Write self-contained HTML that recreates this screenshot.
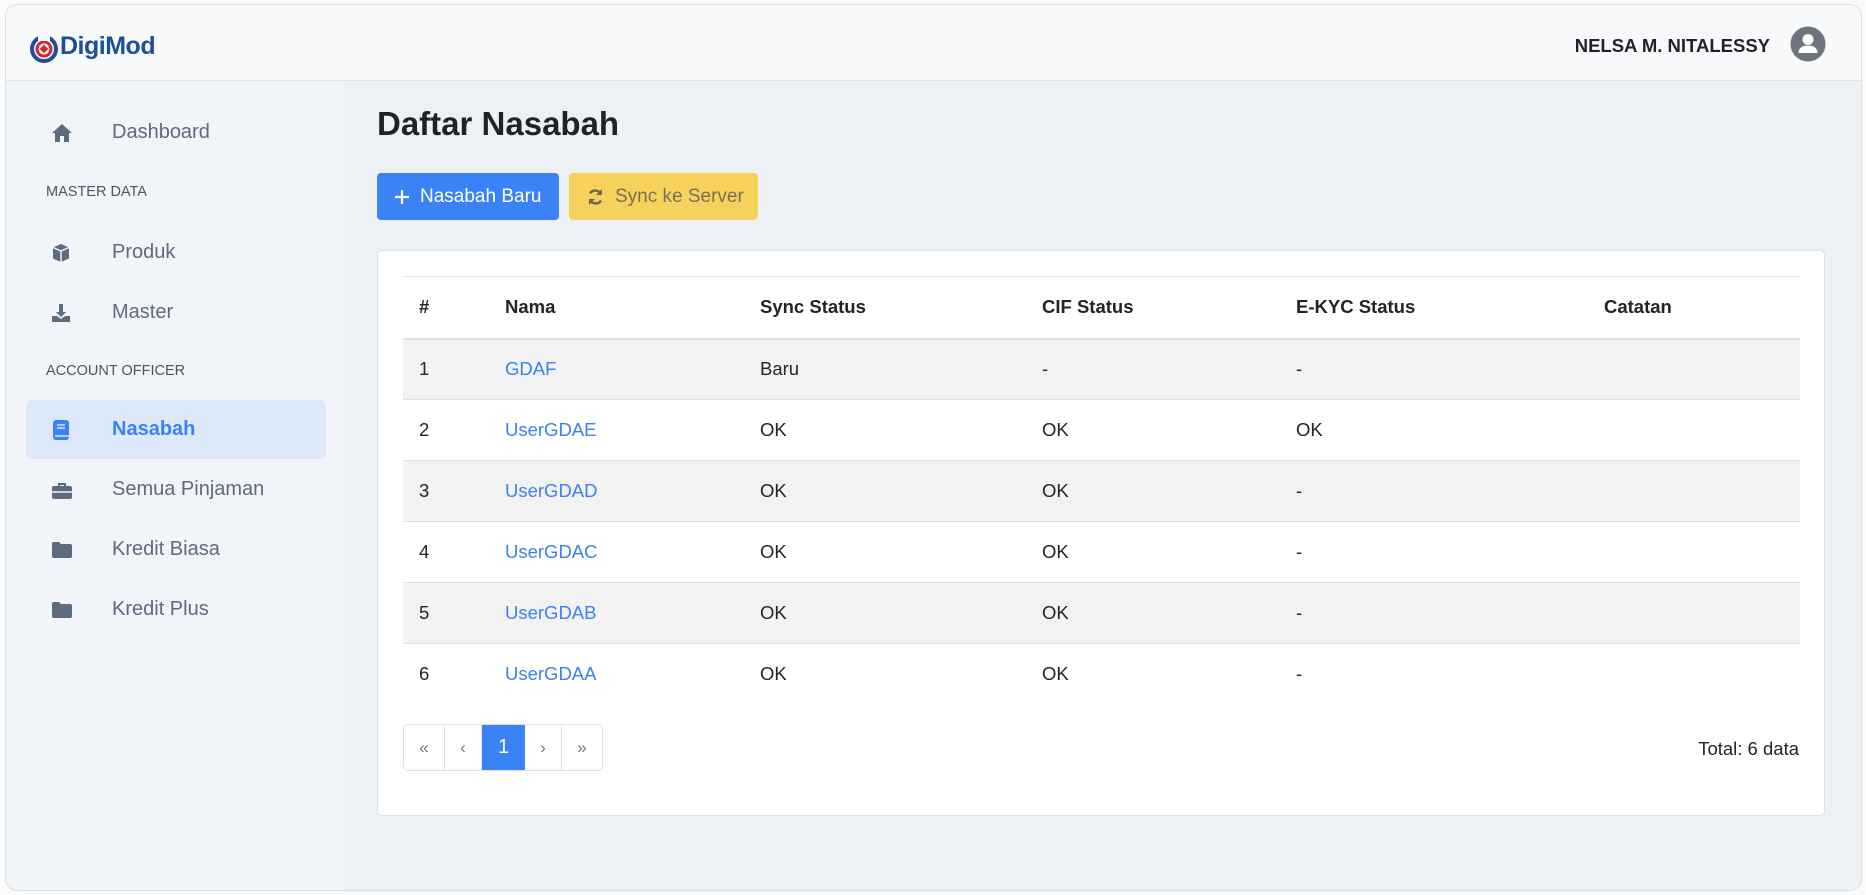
<!DOCTYPE html>
<html><head><meta charset="utf-8"><style>
*{box-sizing:border-box;margin:0;padding:0}
body{width:1866px;height:895px;background:#fafafa;font-family:"Liberation Sans",sans-serif;color:#212529;position:relative;overflow:hidden}
.frame{position:absolute;left:5px;top:4px;width:1857px;height:887px;border:1px solid #dcdfe3;border-radius:12px;overflow:hidden;background:#edf1f6}
.hdr{position:absolute;left:0;top:0;right:0;height:76px;background:#f8f9fb;border-bottom:1px solid #dde4ee}
.side{position:absolute;left:0;top:76px;width:340px;bottom:0;background:#f1f4f9;border-right:1px solid #e2e8f0}
.a{position:absolute}
.item{position:absolute;left:20px;width:300px;height:59px;font-size:20px;color:#5d6b80;display:flex;align-items:center}
.item svg{position:absolute;left:25px}
.item span{position:absolute;left:86px}
.lbl{position:absolute;left:40px;font-size:14.5px;color:#4b5565}
table{border-collapse:collapse;font-size:18.5px}
td,th{padding:0 16px;text-align:left;height:61px;border-bottom:1px solid #dee2e6}
th{font-weight:bold;height:62px;border-bottom:2px solid #dee2e6}
tr.o td{background:#f2f2f2}
a{color:#3b82f6;text-decoration:none}
.pg{position:absolute;left:397px;top:719px;height:47px;display:flex;border:1px solid #dee2e6;border-radius:5px;overflow:hidden}
.pg div{display:flex;align-items:center;justify-content:center;border-right:1px solid #dee2e6;color:#6c7a91;font-size:17px}
</style></head><body>
<div class="frame">
<div class="hdr">
 <svg class="a" style="left:24px;top:30px" width="28" height="28" viewBox="0 0 28 28"><circle cx="14" cy="14" r="12" fill="none" stroke="#1e4f9a" stroke-width="4"/><circle cx="14" cy="14" r="7" fill="none" stroke="#d7262c" stroke-width="3"/><rect x="11" y="11" width="6" height="6" transform="rotate(45 14 14)" fill="#d7262c"/><rect x="8" y="0" width="12" height="6" fill="#f8f9fb"/></svg>
 <div class="a" style="left:54px;top:27px;font-size:25px;font-weight:bold;color:#1e4f9a;letter-spacing:-0.5px">DigiMod</div>
 <div class="a" style="right:91px;top:30px;font-size:18.5px;font-weight:bold;color:#1f2329">NELSA M. NITALESSY</div>
 <svg class="a" style="left:1784px;top:21px" width="36" height="36" viewBox="0 0 36 36"><circle cx="18" cy="18" r="17.5" fill="#6c757d"/><circle cx="18" cy="13.5" r="5.5" fill="#fff"/><path d="M8.5 27c0-5 4-7.5 9.5-7.5s9.5 2.5 9.5 7.5z" fill="#fff"/></svg>
</div>
<div class="side">
 <div class="item" style="top:22px"><svg width="22" height="20" viewBox="0 0 22 20"><path d="M11 1L1 10h3v9h5v-6h4v6h5v-9h3z" fill="#5d6b80"/></svg><span>Dashboard</span></div>
 <div class="lbl" style="top:103px">MASTER DATA</div>
 <div class="item" style="top:142px"><svg width="20" height="20" viewBox="0 0 20 20"><path d="M10 1l8 3.5v11L10 19 2 15.5v-11z" fill="#5d6b80"/><path d="M2 4.5L10 8l8-3.5M10 8v11" stroke="#f1f4f9" stroke-width="1.5" fill="none"/></svg><span>Produk</span></div>
 <div class="item" style="top:202px"><svg width="20" height="20" viewBox="0 0 20 20"><path d="M8 1h4v8h3l-5 5-5-5h3z" fill="#5d6b80"/><path d="M1 13h5l4 3 4-3h5v6H1z" fill="#5d6b80"/></svg><span>Master</span></div>
 <div class="lbl" style="top:282px">ACCOUNT OFFICER</div>
 <div class="item" style="top:319px;background:#dde8f8;border-radius:6px;color:#3b82f6;font-weight:bold"><svg width="20" height="22" viewBox="0 0 20 22"><rect x="2" y="1" width="16" height="20" rx="3" fill="#3b82f6"/><path d="M6 6h8M6 9h8" stroke="#dde8f8" stroke-width="1.5"/><path d="M4 17h14" stroke="#dde8f8" stroke-width="1.5"/></svg><span>Nasabah</span></div>
 <div class="item" style="top:379px"><svg width="22" height="20" viewBox="0 0 22 20"><path d="M7 3h8v3h-2V5H9v1H7z" fill="#5d6b80"/><rect x="1" y="6" width="20" height="13" rx="2" fill="#5d6b80"/><path d="M1 12h20" stroke="#f1f4f9" stroke-width="1.5"/></svg><span>Semua Pinjaman</span></div>
 <div class="item" style="top:439px"><svg width="22" height="18" viewBox="0 0 22 18"><path d="M1 3a2 2 0 012-2h5l2 2h9a2 2 0 012 2v10a2 2 0 01-2 2H3a2 2 0 01-2-2z" fill="#5d6b80"/></svg><span>Kredit Biasa</span></div>
 <div class="item" style="top:499px"><svg width="22" height="18" viewBox="0 0 22 18"><path d="M1 3a2 2 0 012-2h5l2 2h9a2 2 0 012 2v10a2 2 0 01-2 2H3a2 2 0 01-2-2z" fill="#5d6b80"/></svg><span>Kredit Plus</span></div>
</div>
<div class="a" style="left:371px;top:100px;font-size:33px;font-weight:600;color:#1f2329">Daftar Nasabah</div>
<div class="a" style="left:371px;top:168px;width:182px;height:47px;background:#3b82f6;border-radius:4px;color:#fff;font-size:19px;display:flex;align-items:center;padding-left:17px"><svg width="16" height="16" viewBox="0 0 16 16" style="margin-right:10px"><path d="M8 1v14M1 8h14" stroke="#fff" stroke-width="2.2"/></svg>Nasabah Baru</div>
<div class="a" style="left:563px;top:168px;width:189px;height:47px;background:#f6d15c;border-radius:4px;color:#7a6f5a;font-size:19px;display:flex;align-items:center;padding-left:17px"><svg width="19" height="18" viewBox="0 0 19 18" style="margin-right:10px"><path d="M15 7a6 6 0 00-11-1.5M4 11a6 6 0 0011 1.5" stroke="#6f6656" stroke-width="2.4" fill="none"/><path d="M16 1v6h-6zM3 17v-6h6z" fill="#6f6656"/></svg>Sync ke Server</div>
<div class="a" style="left:371px;top:245px;width:1448px;height:566px;background:#fff;border:1px solid #dde2e8;border-radius:5px"></div>
<table class="a" style="left:397px;top:271px;width:1397px;border-top:1px solid #dee2e6">
<colgroup><col style="width:86px"><col style="width:255px"><col style="width:282px"><col style="width:254px"><col style="width:308px"><col></colgroup>
<tr><th>#</th><th>Nama</th><th>Sync Status</th><th>CIF Status</th><th>E-KYC Status</th><th>Catatan</th></tr>
<tr class="o"><td>1</td><td><a>GDAF</a></td><td>Baru</td><td>-</td><td>-</td><td></td></tr>
<tr><td>2</td><td><a>UserGDAE</a></td><td>OK</td><td>OK</td><td>OK</td><td></td></tr>
<tr class="o"><td>3</td><td><a>UserGDAD</a></td><td>OK</td><td>OK</td><td>-</td><td></td></tr>
<tr><td>4</td><td><a>UserGDAC</a></td><td>OK</td><td>OK</td><td>-</td><td></td></tr>
<tr class="o"><td>5</td><td><a>UserGDAB</a></td><td>OK</td><td>OK</td><td>-</td><td></td></tr>
<tr><td style="border:0">6</td><td style="border:0"><a>UserGDAA</a></td><td style="border:0">OK</td><td style="border:0">OK</td><td style="border:0">-</td><td style="border:0"></td></tr>
</table>
<div class="pg"><div style="width:41px">«</div><div style="width:37px">‹</div><div style="width:43px;background:#3b82f6;color:#fff;font-size:20px;border:0">1</div><div style="width:37px">›</div><div style="width:40px;border:0">»</div></div>
<div class="a" style="right:62px;top:733px;font-size:18.5px">Total: 6 data</div>
</div>
</body></html>
